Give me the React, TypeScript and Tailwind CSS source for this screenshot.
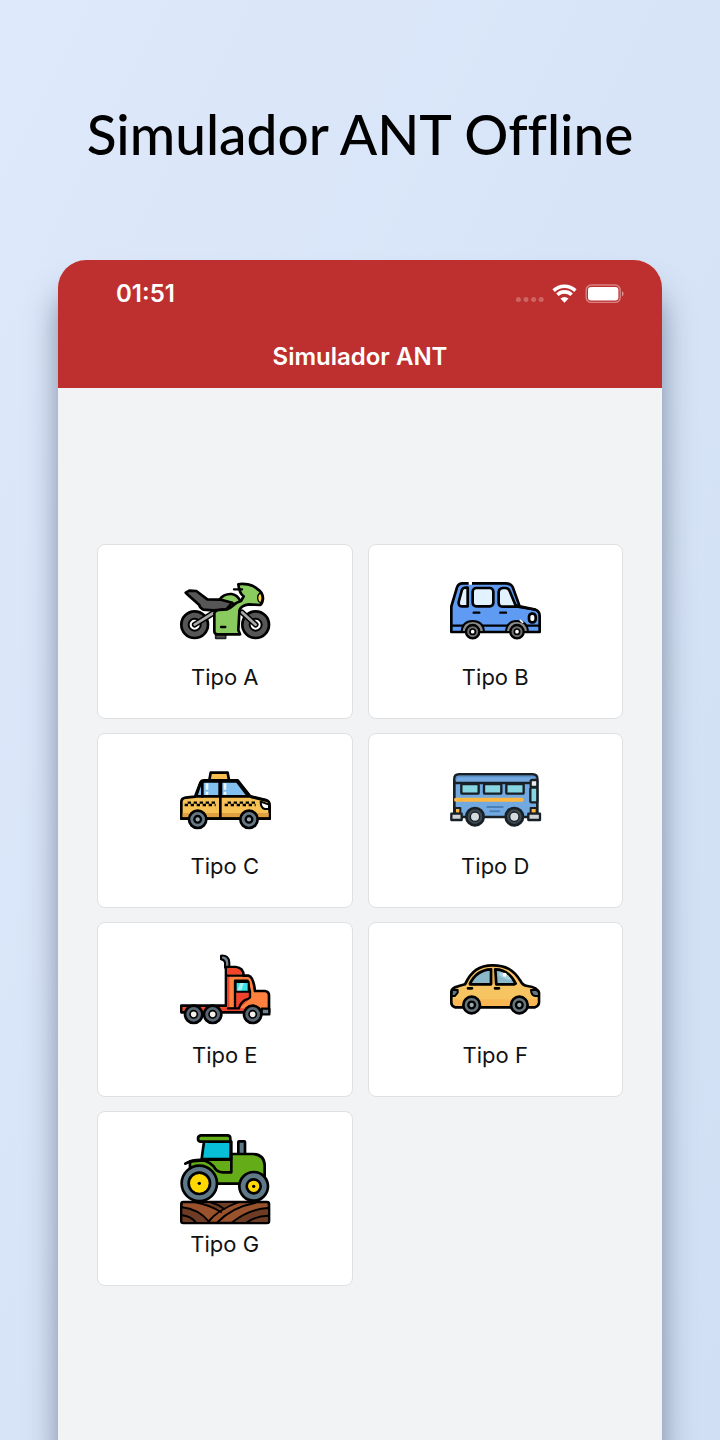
import type { ReactNode } from "react";

type IconProps = { viewBox: string; children: ReactNode };

function VehicleIcon({ viewBox, children }: IconProps) {
  return (
    <svg
      viewBox={viewBox}
      className="size-[90px] overflow-visible"
      fill="none"
      stroke="#000"
      strokeWidth="8"
      strokeLinecap="round"
      strokeLinejoin="round"
      aria-hidden="true"
    >
      {children}
    </svg>
  );
}

function Motorcycle() {
  return (
    <VehicleIcon viewBox="30 -9 270 270">
      {[74, 257].map((x) => (
        <g key={x}>
          <circle cx={x} cy="164" r="40" fill="#565656" />
          <circle cx={x} cy="164" r="18" fill="#fff" strokeWidth="6" />
          <circle cx={x} cy="164" r="8" fill="#999" stroke="none" />
        </g>
      ))}
      <path d="M74 164L130 129M257 164L216 127" strokeWidth="17" />
      <path d="M74 164L130 129M257 164L216 127" stroke="#a8a8a8" strokeWidth="8" />
      <path d="M137 193h30v12h-30z" fill="#565656" stroke="#222" strokeWidth="5" />
      <path d="M148 92C153 77 170 71 185 72C198 74 207 83 212 96L190 103Z" fill="#8acb60" />
      <path d="M47 68L58 62L79 63L112 88L153 89L187 98L169 118L130 121L100 119Q88 112 88 105L60 80Z" fill="#565656" />
      <path
        d="M205 43C218 39 249 43 262 57Q278 66 279 85Q278 101 270 105L237 103C222 104 206 113 208 127L205 180L210 193H140Q133 191 133 184V131Q134 122 147 120L171 118C187 116 190 98 213 93L221 79Q208 70 205 43Z"
        fill="#8acb60"
      />
      <path d="M192 58H216M153 171H166" strokeWidth="7" />
      <path d="M272 69Q263 72 263 84Q264 97 273 98Q280 84 272 69Z" fill="#ffd63b" strokeWidth="4" />
    </VehicleIcon>
  );
}

function Van() {
  return (
    <VehicleIcon viewBox="30 -9 270 270">
      <path
        d="M34 186V109L51 52Q55 40 68 40H198Q213 41 218 51L239 109L286 119Q299 123 299 137V186Z"
        fill="#609bf3"
      />
      <path d="M65 109Q55 109 56 96L66 59Q69 53 76 53H83V109Z" fill="#e2f3ff" />
      <rect x="98" y="54" width="62" height="55" rx="11" fill="#e2f3ff" />
      <path d="M188 54H198Q206 55 209 63L226 104L237 110H188Q176 109 176 98V66Q177 55 188 54Z" fill="#e2f3ff" />
      <path d="M237 111L286 119M101 128H118M181 128H198M36 167H70M128 167H203M260 167H297" strokeWidth="7" />
      <rect x="267" y="131" width="20" height="26" rx="9" fill="#fff" />
      <path
        d="M65 186Q67 153 98 153Q130 153 132 186ZM198 186Q200 153 231 153Q262 153 264 186Z"
        fill="#8a8a8a"
        strokeWidth="6"
      />
      {[98, 231].map((x) => (
        <g key={x}>
          <circle cx={x} cy="185" r="20" fill="#6e6e6e" strokeWidth="7" />
          <circle cx={x} cy="185" r="8" fill="#fff" strokeWidth="5" />
        </g>
      ))}
      <path d="M86 40H96" stroke="#fff" strokeWidth="9" strokeLinecap="butt" />
      <path d="M241 151L248 157" stroke="#fff" strokeWidth="5" />
    </VehicleIcon>
  );
}

function Taxi() {
  return (
    <VehicleIcon viewBox="30 -12 270 270">
      <path d="M118 61L122 38H173L177 61Z" fill="#f5be4e" />
      <path
        d="M34 176V126Q34 115 47 113L75 110L91 68Q94 61 102 61H203L241 109L288 120Q299 123 299 136V176Z"
        fill="#f6c255"
      />
      <path d="M38 159H296V172H38Z" fill="#dfa140" stroke="none" />
      <path d="M78 109L92 69Q94 64 101 64H149V109Z" fill="#82c0ef" />
      <path d="M153 64H201L235 109H153Z" fill="#82c0ef" />
      <path d="M97 64V109M151 63V174M241 110L290 122M34 176H299" />
      <path d="M111 70V89M111 95V104M165 70V89M165 95V104" stroke="#e9f7ff" strokeWidth="8" strokeLinecap="butt" />
      <path d="M53 128H137M173 128H257" strokeWidth="7" strokeLinecap="butt" strokeDasharray="10 8" />
      <path d="M44 135H137M164 135H257" strokeWidth="7" strokeLinecap="butt" strokeDasharray="10 8" />
      <path d="M272 125L297 134V147H284Q272 143 272 125Z" fill="#fff" strokeWidth="6" />
      {[83, 237].map((x) => (
        <g key={x}>
          <circle cx={x} cy="178" r="26" fill="#657985" />
          <circle cx={x} cy="178" r="10" fill="#98a9b4" strokeWidth="7" />
        </g>
      ))}
    </VehicleIcon>
  );
}

function Bus() {
  return (
    <VehicleIcon viewBox="30 -12 270 270">
      <path d="M43 171V58Q43 43 57 43H278Q292 43 292 58V171Z" fill="#72a9e1" stroke="#182026" />
      <path d="M49 56Q49 49 57 49H278Q286 49 287 56" stroke="#5c91c7" strokeWidth="5" />
      <path d="M45 69H268" stroke="#182026" strokeWidth="7" />
      {[64, 132, 199].map((x) => (
        <rect key={x} x={x} y="72" width="52" height="29" rx="3" fill="#87d5e1" stroke="#182026" strokeWidth="7" />
      ))}
      <path d="M48 119H245" stroke="#ffb740" strokeWidth="12" />
      <path d="M142 141H188M151 154H178" stroke="#4a7fb8" strokeWidth="6" />
      <rect x="272" y="60" width="20" height="21" rx="4" fill="#e8ecef" stroke="#182026" strokeWidth="7" />
      <rect x="271" y="83" width="21" height="44" rx="4" fill="#87d5e1" stroke="#182026" strokeWidth="7" />
      <path d="M45 144H61V161H45ZM272 144H290V161H272Z" fill="#ffb740" stroke="#182026" strokeWidth="6" />
      <path d="M34 161H65V180H34ZM265 161H300V180H265Z" fill="#ccd2d6" stroke="#182026" strokeWidth="7" />
      {[105, 223].map((x) => (
        <g key={x} stroke="#182026">
          <circle cx={x} cy="170" r="26" fill="#3c4a54" />
          <circle cx={x} cy="170" r="14" fill="#d5dade" strokeWidth="4" />
        </g>
      ))}
    </VehicleIcon>
  );
}

function Truck() {
  return (
    <VehicleIcon viewBox="30 0 270 270">
      <path d="M165 68V53Q164 45 153 43V32Q177 30 178 53V68Z" fill="#718190" strokeWidth="6" />
      <path d="M34 202V182H168V66H197Q220 68 221 92H235Q250 94 255 138H285Q297 140 297 151V202Z" fill="#ff813f" />
      <path d="M172 70H197Q213 72 216 88H172Z" fill="#f3442b" stroke="none" />
      <path d="M38 187H195V190H210L293 191V198H38ZM195 141H240V161L208 190H195ZM172 92H178V190H172Z" fill="#ef432d" stroke="none" />
      <path d="M170 92H221M195 190V107H233L240 140V157Q239 160 225 165Q210 175 207 190H174M180 190H207" strokeWidth="7" />
      <rect x="197" y="111" width="39" height="29" fill="#3ce0e5" strokeWidth="6" />
      <path d="M211 114H222L214 136H202Z" fill="#a0f2f3" stroke="none" />
      <path d="M275 191H298V208H275Z" fill="#718190" strokeWidth="7" />
      {[71, 128, 248].map((x) => (
        <g key={x}>
          <circle cx={x} cy="208" r="26" fill="#596775" />
          <circle cx={x} cy="208" r="11" fill="#f3efea" strokeWidth="5" />
        </g>
      ))}
    </VehicleIcon>
  );
}

function Sedan() {
  return (
    <VehicleIcon viewBox="30 -15 270 270">
      <path
        d="M45 172Q34 167 34 158V125Q35 113 54 109L75 103C94 64 117 46 158 46C197 46 220 59 241 92Q248 107 262 108Q292 112 297 128V158Q296 168 285 172Z"
        fill="#f7c462"
      />
      <path d="M38 148H293V158Q286 168 274 168H52Q38 164 38 148Z" fill="#ffad49" stroke="none" opacity=".55" />
      <path d="M83 103C98 70 119 55 158 53C196 53 215 68 232 103Z" fill="#e0aa4e" stroke="none" />
      <path d="M90 101C105 70 126 59 153 58V103H90Z" fill="#8abac9" />
      <path d="M166 58C195 58 213 74 227 101L223 103H169Z" fill="#8abac9" />
      <path d="M178 67Q205 70 215 89H202L178 77Z" fill="#a9d3df" stroke="none" />
      <circle cx="194" cy="74" r="6" fill="#fff" stroke="none" />
      <path d="M84 115H96M165 115H177" strokeWidth="8" />
      <path d="M36 120H53V128L45 138H35ZM273 120H290L297 128V138H285Q274 136 273 120Z" fill="#607681" strokeWidth="6" />
      {[95, 238].map((x) => (
        <g key={x}>
          <circle cx={x} cy="165" r="25" fill="#66757e" />
          <circle cx={x} cy="165" r="10" fill="#99a8b0" strokeWidth="7" />
        </g>
      ))}
    </VehicleIcon>
  );
}

function Tractor() {
  return (
    <VehicleIcon viewBox="30 27 270 270">
      <rect x="205" y="49" width="20" height="43" rx="2" fill="#607989" />
      <path d="M102 50H182V102H95Z" fill="#08bfd8" />
      <path d="M60 125V109Q76 104 104 104H183V87H249Q283 88 284 121V176H60Z" fill="#64ad18" />
      <path d="M46 116Q63 105 105 107Q122 113 131 124Q140 142 159 142H184V50" />
      <path d="M93 31H172Q181 31 181 40V50H93Q84 49 84 41Q84 32 93 31Z" fill="#64ad18" />
      <circle cx="88" cy="175" r="53" fill="#607989" />
      <circle cx="88" cy="175" r="32" fill="#ffd900" />
      <circle cx="251" cy="184" r="43" fill="#607989" />
      <circle cx="251" cy="184" r="21" fill="#ffd900" />
      <circle cx="88" cy="175" r="5" fill="#000" stroke="none" />
      <circle cx="251" cy="184" r="5" fill="#000" stroke="none" />
      <rect x="34" y="231" width="263" height="63" rx="6" fill="#9a522d" />
      <path d="M38 249Q77 250 112 290H38ZM196 290Q238 253 293 250V290Z" fill="#6e3b25" stroke="none" />
      <path d="M90 235H185L150 253Q121 239 90 235Z" fill="#6e3b25" stroke="none" />
      <path
        d="M36 247Q84 251 119 292M36 271Q62 273 77 292M77 232Q120 241 153 261M122 232Q144 238 163 252M114 291Q145 253 204 232M142 292Q185 247 257 233M187 292Q236 252 295 249M231 292Q257 273 295 272"
        strokeWidth="6"
      />
    </VehicleIcon>
  );
}

const licenses = [
  { label: "Tipo A", Icon: Motorcycle },
  { label: "Tipo B", Icon: Van },
  { label: "Tipo C", Icon: Taxi },
  { label: "Tipo D", Icon: Bus },
  { label: "Tipo E", Icon: Truck },
  { label: "Tipo F", Icon: Sedan },
  { label: "Tipo G", Icon: Tractor },
];

function StatusBar() {
  return (
    <div className="flex h-[68px] items-center justify-between pr-[38px] pl-[58px]">
      <span className="text-2xl font-semibold">01:51</span>
      <div className="flex items-center gap-2">
        <svg viewBox="0 0 29 20" className="h-5 w-[29px]" fill="#fff" fillOpacity=".25" aria-hidden="true">
          <circle cx="2.4" cy="15.6" r="2.5" />
          <circle cx="10" cy="15.6" r="2.5" />
          <circle cx="17.6" cy="15.6" r="2.5" />
          <circle cx="25.2" cy="15.6" r="2.5" />
        </svg>
        <svg viewBox="0 0 24 20" className="h-5 w-6 overflow-visible" aria-hidden="true">
          <g fill="none" stroke="#fff" strokeWidth="3.6">
            <path d="M.6 6.6A16 16 0 0 1 22.4 6.6" />
            <path d="M4.4 10.8A10.2 10.2 0 0 1 18.6 10.8" />
          </g>
          <path d="M7.4 14.4Q11.5 11.4 15.6 14.4L11.5 18.8Z" fill="#fff" />
        </svg>
        <svg viewBox="0 0 39 20" className="h-5 w-[39px]" aria-hidden="true">
          <rect x="1.2" y="1" width="34" height="17.4" rx="5" fill="none" stroke="#fff" strokeOpacity=".4" strokeWidth="1.4" />
          <rect x="3" y="3" width="30.4" height="13.4" rx="3" fill="#fff" />
          <path d="M37 7.2Q38.6 8 38.6 9.8T37 12.4Z" fill="#fff" fillOpacity=".5" />
        </svg>
      </div>
    </div>
  );
}

export default function App() {
  return (
    <div className="flex min-h-screen flex-col overflow-hidden bg-linear-to-br from-[#dee9fb] to-[#d0dff3] px-[58px] font-['Inter',sans-serif]">
      <h1 className="pt-[94px] pb-[86px] text-center font-['Lato',sans-serif] text-[55px] leading-20 font-medium whitespace-nowrap text-black [font-variant-ligatures:none]">
        Simulador ANT Offline
      </h1>
      <main className="flex grow flex-col rounded-t-[28px] bg-[#f2f3f5] shadow-[0_30px_30px_rgba(35,50,80,0.5)]">
        <header className="h-32 rounded-t-[28px] bg-[#be3030] text-white">
          <StatusBar />
          <h2 className="text-center text-2xl leading-[58px] font-semibold">Simulador ANT</h2>
        </header>
        <div className="grid grid-cols-2 gap-x-[15px] gap-y-[14px] px-[39px] pt-[156px] pb-10">
          {licenses.map(({ label, Icon }) => (
            <button
              key={label}
              type="button"
              className="flex h-[175px] flex-col items-center rounded-lg border border-[#dfe0e2] bg-white pt-[22px] text-[22px] leading-10 text-[#111]"
            >
              <Icon />
              {label}
            </button>
          ))}
        </div>
      </main>
    </div>
  );
}
